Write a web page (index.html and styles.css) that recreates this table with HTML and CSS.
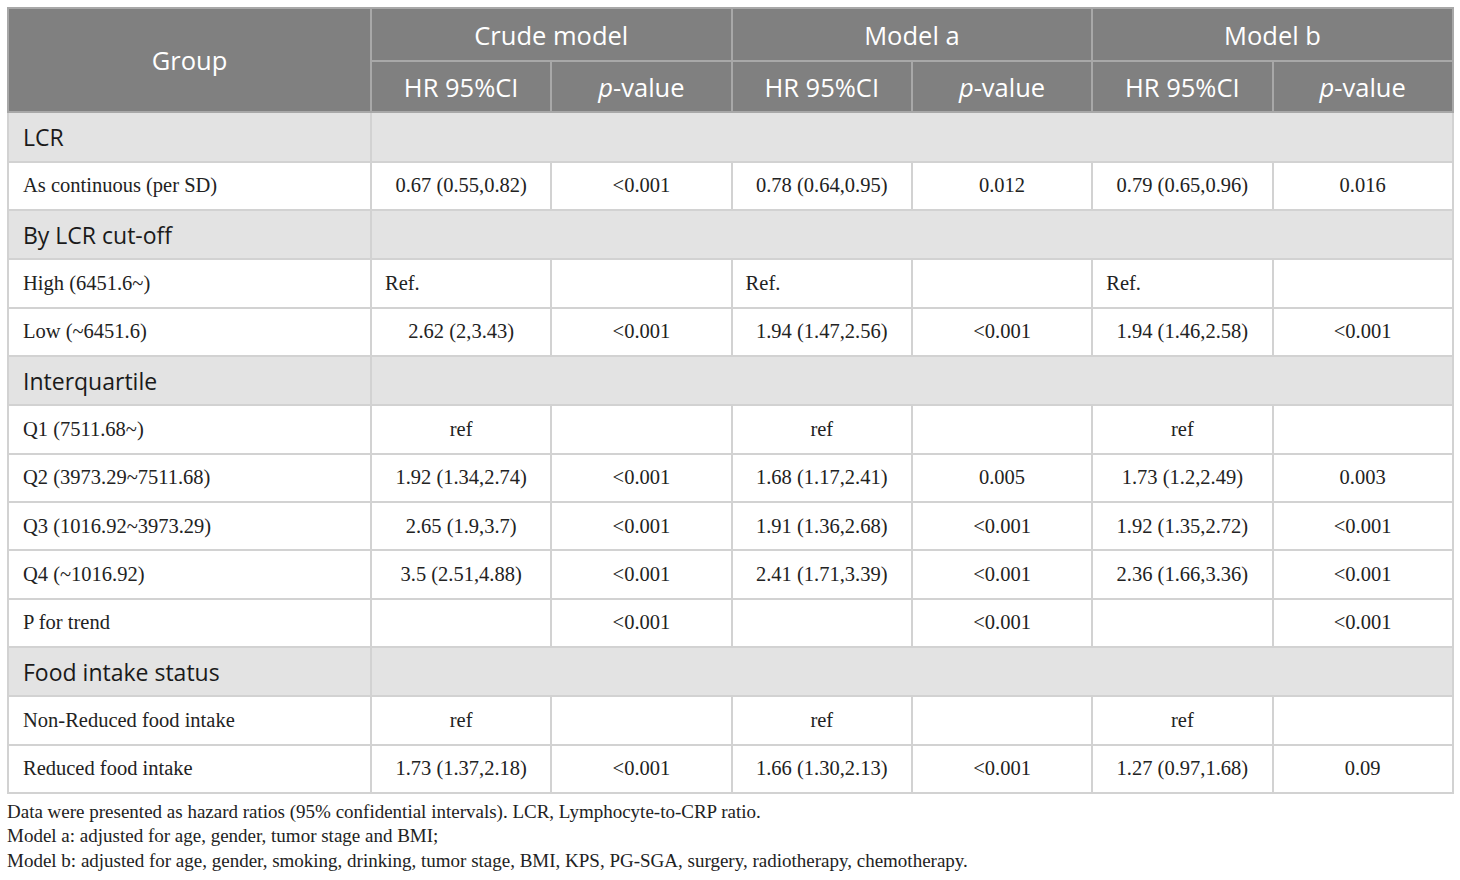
FILE: index.html
```html
<!DOCTYPE html>
<html lang="en">
<head>
<meta charset="utf-8">
<title>Table</title>
<link rel="stylesheet" href="styles.css">
</head>
<body>
<div class="page">
<table class="hr-table">
  <colgroup>
    <col class="c-group">
    <col class="c-num"><col class="c-num"><col class="c-num"><col class="c-num"><col class="c-num"><col class="c-num">
  </colgroup>
  <thead>
    <tr class="h1">
      <th rowspan="2" class="h-group">Group</th>
      <th colspan="2">Crude model</th>
      <th colspan="2">Model a</th>
      <th colspan="2">Model b</th>
    </tr>
    <tr class="h2">
      <th>HR 95%CI</th><th><i>p</i>-value</th>
      <th>HR 95%CI</th><th><i>p</i>-value</th>
      <th>HR 95%CI</th><th><i>p</i>-value</th>
    </tr>
  </thead>
  <tbody>
    <tr class="sec"><td>LCR</td><td colspan="6"></td></tr>
    <tr class="row"><td>As continuous (per SD)</td><td>0.67 (0.55,0.82)</td><td>&lt;0.001</td><td>0.78 (0.64,0.95)</td><td>0.012</td><td>0.79 (0.65,0.96)</td><td>0.016</td></tr>
    <tr class="sec"><td>By LCR cut-off</td><td colspan="6"></td></tr>
    <tr class="row"><td>High (6451.6~)</td><td class="l">Ref.</td><td></td><td class="l">Ref.</td><td></td><td class="l">Ref.</td><td></td></tr>
    <tr class="row"><td>Low (~6451.6)</td><td>2.62 (2,3.43)</td><td>&lt;0.001</td><td>1.94 (1.47,2.56)</td><td>&lt;0.001</td><td>1.94 (1.46,2.58)</td><td>&lt;0.001</td></tr>
    <tr class="sec"><td>Interquartile</td><td colspan="6"></td></tr>
    <tr class="row"><td>Q1 (7511.68~)</td><td>ref</td><td></td><td>ref</td><td></td><td>ref</td><td></td></tr>
    <tr class="row"><td>Q2 (3973.29~7511.68)</td><td>1.92 (1.34,2.74)</td><td>&lt;0.001</td><td>1.68 (1.17,2.41)</td><td>0.005</td><td>1.73 (1.2,2.49)</td><td>0.003</td></tr>
    <tr class="row"><td>Q3 (1016.92~3973.29)</td><td>2.65 (1.9,3.7)</td><td>&lt;0.001</td><td>1.91 (1.36,2.68)</td><td>&lt;0.001</td><td>1.92 (1.35,2.72)</td><td>&lt;0.001</td></tr>
    <tr class="row"><td>Q4 (~1016.92)</td><td>3.5 (2.51,4.88)</td><td>&lt;0.001</td><td>2.41 (1.71,3.39)</td><td>&lt;0.001</td><td>2.36 (1.66,3.36)</td><td>&lt;0.001</td></tr>
    <tr class="row"><td>P for trend</td><td></td><td>&lt;0.001</td><td></td><td>&lt;0.001</td><td></td><td>&lt;0.001</td></tr>
    <tr class="sec"><td>Food intake status</td><td colspan="6"></td></tr>
    <tr class="row"><td>Non-Reduced food intake</td><td>ref</td><td></td><td>ref</td><td></td><td>ref</td><td></td></tr>
    <tr class="row"><td>Reduced food intake</td><td>1.73 (1.37,2.18)</td><td>&lt;0.001</td><td>1.66 (1.30,2.13)</td><td>&lt;0.001</td><td>1.27 (0.97,1.68)</td><td>0.09</td></tr>
  </tbody>
</table>
<div class="notes">
  <p>Data were presented as hazard ratios (95% confidential intervals). LCR, Lymphocyte-to-CRP ratio.</p>
  <p>Model a: adjusted for age, gender, tumor stage and BMI;</p>
  <p>Model b: adjusted for age, gender, smoking, drinking, tumor stage, BMI, KPS, PG-SGA, surgery, radiotherapy, chemotherapy.</p>
</div>
</div>
</body>
</html>
```

FILE: styles.css
```css
html, body {
  margin: 0;
  padding: 0;
  background: #ffffff;
}
.page {
  padding: 7px 7px 0 7px;
}
.hr-table {
  width: 1445px;
  table-layout: fixed;
  border-collapse: collapse;
  font-family: "Liberation Serif", "Times New Roman", serif;
  color: #222222;
}
.c-group { width: 363px; }
.c-num { width: 180.3px; }
.hr-table th, .hr-table td {
  border: 2px solid #d2d2d2;
  padding: 0;
}
.hr-table thead th {
  background: #808080;
  color: #ffffff;
  font-family: "Open Sans", "Noto Sans", sans-serif;
  font-weight: 400;
  font-size: 25.5px;
  text-align: center;
  border-color: #a8a8a8;
}
.hr-table thead i {
  font-style: italic;
}
.h1 { height: 53px; }
.h2 { height: 51px; }
.sec { height: 49.5px; }
.sec td {
  background: #e3e3e3;
  font-family: "Open Sans", "Noto Sans", sans-serif;
  font-size: 23px;
  color: #1a1a1a;
  padding-left: 14px;
}
.row { height: 48.3px; }
.row td {
  font-size: 20.5px;
  text-align: center;
}
.row td:first-child {
  text-align: left;
  padding-left: 14px;
}
.row td.l {
  text-align: left;
  padding-left: 13px;
}
.notes {
  font-family: "Liberation Serif", "Times New Roman", serif;
  font-size: 19px;
  color: #222222;
  padding-top: 6px;
}
.notes p {
  margin: 0;
  line-height: 24.5px;
}
```
